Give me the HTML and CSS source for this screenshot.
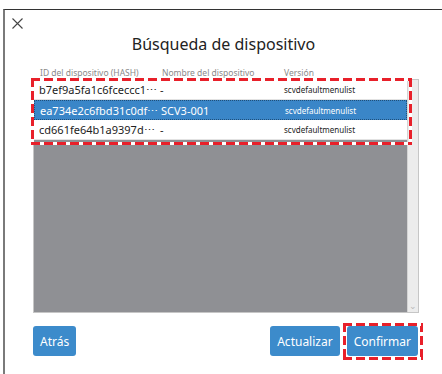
FILE: index.html
```html
<!DOCTYPE html>
<html lang="es">
  <head>
    <meta charset="UTF-8" />
    <title>Búsqueda de dispositivo</title>
    <link rel="stylesheet" href="styles.css">
  </head>
  <body>
    <div class="window">
      <div class="close">
        <svg width="11" height="11" viewBox="0 0 11 11">
          <path d="M0.5 0.5 L10.5 10.5 M10.5 0.5 L0.5 10.5" stroke="#444" stroke-width="1.1" fill="none" />
        </svg>
      </div>
      <h1 class="title">Búsqueda de dispositivo</h1>

      <div class="cols">
        <span>ID del dispositivo (HASH)</span>
        <span>Nombre del dispositivo</span>
        <span>Versión</span>
      </div>

      <div class="list">
        <div class="rows">
          <div class="row">
            <span>b7ef9a5fa1c6fceccc1⋯</span>
            <span>-</span>
            <span class="ver">scvdefaultmenulist</span>
          </div>
          <div class="row selected">
            <span>ea734e2c6fbd31c0df⋯</span>
            <span>SCV3-001</span>
            <span class="ver">scvdefaultmenulist</span>
          </div>
          <div class="row">
            <span>cd661fe64b1a9397d⋯</span>
            <span>-</span>
            <span class="ver">scvdefaultmenulist</span>
          </div>
        </div>
        <div class="scrollbar"><span class="arrow">⌄</span></div>
        <div class="mark mark-list"></div>
      </div>

      <div class="footer">
        <button class="btn">Atrás</button>
        <div class="spacer"></div>
        <button class="btn">Actualizar</button>
        <div class="btn-wrap">
          <button class="btn">Confirmar</button>
          <div class="mark mark-btn"></div>
        </div>
      </div>
    </div>
  </body>
</html>
```

FILE: styles.css
```css
* {
  box-sizing: border-box;
}
body {
  margin: 0;
  background: #ffffff;
  font-family: "Noto Sans", "Open Sans", sans-serif;
  color: #222;
}
.window {
  margin: 9px 0 0 3px;
  height: 365px;
  border-top: 1px solid #333;
  border-left: 2px solid #7a7a7a;
  position: relative;
}
.close {
  margin: 8px 0 0 7px;
  height: 11px;
  line-height: 0;
}
.title {
  margin: 5px 0 0 0;
  font-size: 16px;
  line-height: 20px;
  font-weight: normal;
  text-align: center;
  color: #222;
}
.cols {
  display: grid;
  grid-template-columns: 122px 122px auto;
  margin: 13px 0 0 35px;
  font-size: 8.5px;
  line-height: 12px;
  color: #8a8a8a;
}
.list {
  position: relative;
  display: flex;
  margin-left: 28px;
  width: 386px;
  height: 234px;
  border: 1px solid #c6c6c6;
  background: #8f9094;
}
.rows {
  flex: 1;
}
.row {
  display: grid;
  grid-template-columns: 121px 124px auto;
  align-items: center;
  height: 20px;
  padding-left: 5px;
  background: #ffffff;
  font-size: 11px;
  color: #222;
  border-bottom: 1px solid #e2e2e2;
}
.row .ver {
  font-size: 8px;
}
.row.selected {
  background: #3a86c8;
  color: #ffffff;
  border: 1px dotted #1f4f7a;
}
.scrollbar {
  width: 11px;
  background: #ececec;
  border-left: 1px solid #d4d4d4;
  display: flex;
  align-items: flex-end;
  justify-content: center;
}
.arrow {
  font-size: 9px;
  line-height: 12px;
  color: #b8b8b8;
}
.footer {
  display: flex;
  gap: 7px;
  margin: 13px 0 0 28px;
  width: 385px;
}
.spacer {
  flex: 1;
}
.btn {
  height: 30px;
  padding: 0 7px;
  border: none;
  border-radius: 3px;
  background: #3c8bcb;
  color: #ffffff;
  font-family: "Noto Sans", "Open Sans", sans-serif;
  font-size: 12px;
}
.btn-wrap {
  position: relative;
}
/* red dashed marker frames: dash 9px, white gap 4px */
.mark {
  position: absolute;
  background:
    repeating-linear-gradient(90deg, #e8202a 0 9px, #ffffff 9px 13px) top left / 100% 3px no-repeat,
    repeating-linear-gradient(90deg, #e8202a 0 9px, #ffffff 9px 13px) bottom left / 100% 3px no-repeat,
    repeating-linear-gradient(180deg, #e8202a 0 9px, #ffffff 9px 13px) top left / 3px 100% no-repeat,
    repeating-linear-gradient(180deg, #e8202a 0 9px, #ffffff 9px 13px) top right / 3px 100% no-repeat;
}
.mark-list {
  left: -3px;
  top: -2px;
  width: 381px;
  height: 67px;
}
.mark-btn {
  left: -4px;
  top: -3px;
  width: 80px;
  height: 37px;
}
```
